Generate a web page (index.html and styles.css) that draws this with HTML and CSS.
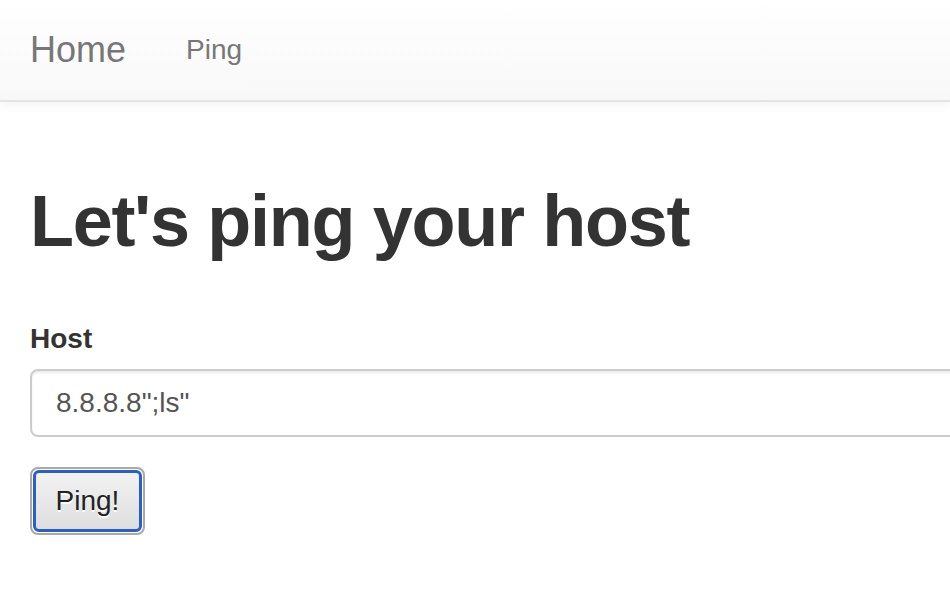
FILE: index.html
```html
<!DOCTYPE html>
<html lang="en">
<head>
<meta charset="utf-8">
<title>Ping</title>
<link rel="stylesheet" href="styles.css">
</head>
<body>
<nav class="navbar">
  <a class="brand" href="#">Home</a>
  <ul class="nav">
    <li><a href="#">Ping</a></li>
  </ul>
</nav>
<main class="container">
  <h1 class="title">Let's ping your host</h1>
  <form class="form">
    <div class="form-group">
      <label class="label" for="host">Host</label>
      <input class="input" id="host" type="text" value="8.8.8.8&quot;;ls&quot;">
    </div>
    <button class="btn" type="button"><span class="btn-inner">Ping!</span></button>
  </form>
</main>
</body>
</html>
```
FILE: styles.css
```css
html, body {
  margin: 0;
  padding: 0;
  overflow: hidden;
  background: #fff;
}
body {
  font-family: "Liberation Sans", Arial, Helvetica, sans-serif;
  color: #333;
  width: 950px;
  height: 598px;
}
.navbar {
  display: flex;
  align-items: flex-start;
  height: 100px;
  padding: 0 0 0 30px;
  background: linear-gradient(to bottom, #ffffff 0%, #f8f8f8 100%);
  border-bottom: 2px solid #e4e4e4;
  box-shadow: 0 2px 10px rgba(0, 0, 0, 0.06);
  position: relative;
}
.brand {
  display: block;
  padding: 30px 30px 30px 0;
  font-size: 36px;
  line-height: 40px;
  color: #777;
  text-decoration: none;
}
.nav {
  display: flex;
  list-style: none;
  margin: 0;
  padding: 0;
}
.nav a {
  display: block;
  padding: 30px 30px;
  font-size: 28px;
  line-height: 40px;
  color: #777;
  text-decoration: none;
}
.container {
  padding: 0 0 0 30px;
}
.title {
  margin: 80px 0 58px 0;
  font-size: 72px;
  line-height: 79px;
  font-weight: bold;
  color: #333;
  letter-spacing: -1.3px;
}
.form-group {
  margin-bottom: 30px;
}
.label {
  display: block;
  font-size: 28px;
  line-height: 40px;
  font-weight: bold;
  margin-bottom: 10px;
  color: #333;
}
.input {
  display: block;
  box-sizing: border-box;
  width: 960px;
  height: 68px;
  padding: 12px 24px;
  border: 2px solid #cccccc;
  border-radius: 8px;
  box-shadow: inset 0 2px 2px rgba(0, 0, 0, 0.075);
  font-family: "Liberation Sans", Arial, Helvetica, sans-serif;
  font-size: 28px;
  color: #555;
  background: #fff;
  outline: none;
}
.btn {
  display: block;
  box-sizing: border-box;
  width: 115px;
  height: 68px;
  margin: 0;
  padding: 1px;
  border: 2px solid #a9a9a9;
  border-radius: 8px;
  background: #fff;
  cursor: pointer;
}
.btn-inner {
  display: flex;
  align-items: center;
  justify-content: center;
  box-sizing: border-box;
  height: 100%;
  border: 3px solid #2a5fc9;
  border-radius: 6px;
  background: linear-gradient(to bottom, #f2f2f2 0%, #dedede 100%);
  font-family: "Liberation Sans", Arial, Helvetica, sans-serif;
  font-size: 28px;
  color: #222;
  text-shadow: 0 2px 0 #fff;
}
```
